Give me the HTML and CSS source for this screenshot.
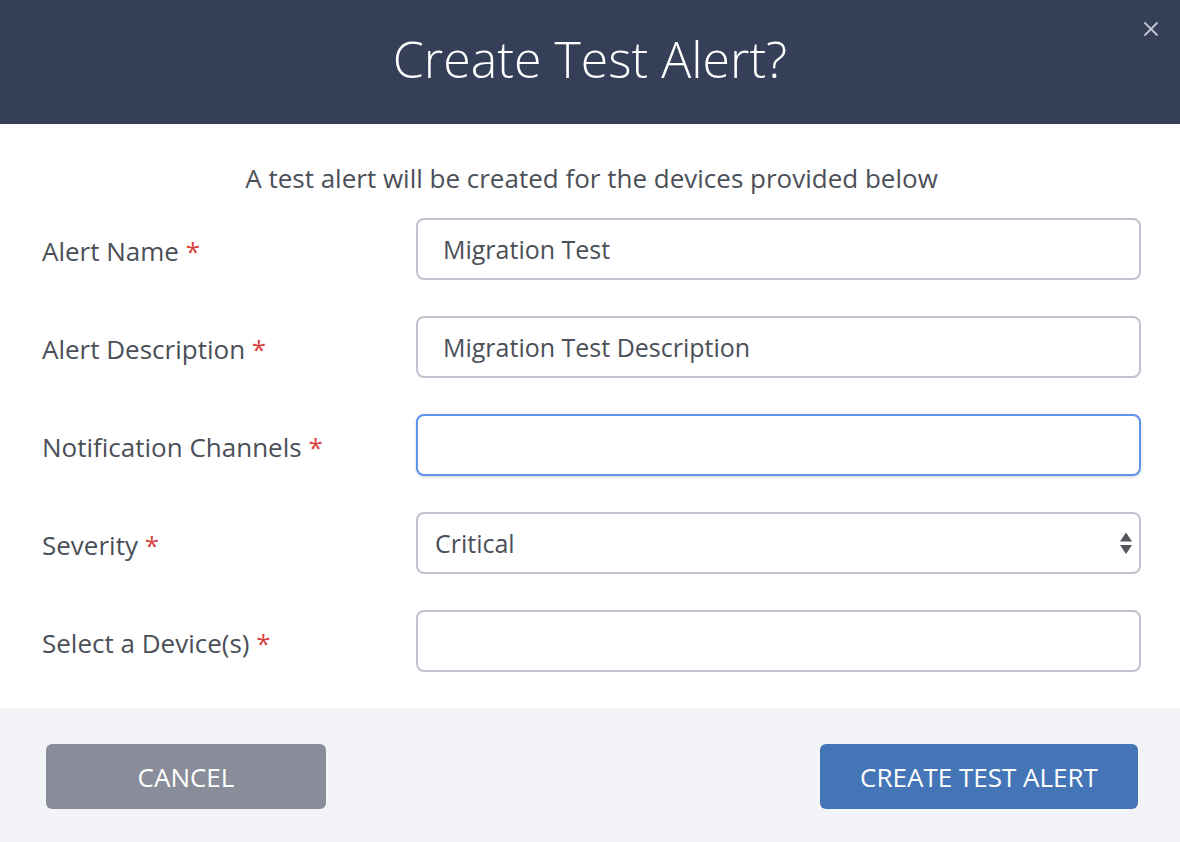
FILE: index.html
```html
<!DOCTYPE html>
<html lang="en">
<head>
<meta charset="utf-8">
<title>Create Test Alert?</title>
<link rel="stylesheet" href="styles.css">
</head>
<body>
<div class="modal">
  <header class="modal-header">
    <h1 class="modal-title">Create Test Alert?</h1>
    <button class="close" aria-label="Close">
      <svg width="14" height="14" viewBox="0 0 14 14"><path d="M1 1L13 13M13 1L1 13" stroke="currentColor" stroke-width="1.8" stroke-linecap="round"/></svg>
    </button>
  </header>
  <main class="modal-body">
    <p class="intro">A test alert will be created for the devices provided below</p>
    <form class="form">
      <label class="label">Alert Name <span class="req">*</span></label>
      <div class="field"><input class="input" type="text" value="Migration Test"></div>

      <label class="label">Alert Description <span class="req">*</span></label>
      <div class="field"><input class="input" type="text" value="Migration Test Description"></div>

      <label class="label">Notification Channels <span class="req">*</span></label>
      <div class="field"><div class="input focused"></div></div>

      <label class="label">Severity <span class="req">*</span></label>
      <div class="field">
        <div class="input select">
          <span>Critical</span>
          <svg class="arrows" width="12" height="24" viewBox="0 0 12 24"><path d="M6 1.5L12 10.5H0Z" fill="#53565f"/><path d="M6 23L12 14H0Z" fill="#53565f"/></svg>
        </div>
      </div>

      <label class="label">Select a Device(s) <span class="req">*</span></label>
      <div class="field"><div class="input"></div></div>
    </form>
  </main>
  <footer class="modal-footer">
    <button class="btn btn-cancel">CANCEL</button>
    <button class="btn btn-primary">CREATE TEST ALERT</button>
  </footer>
</div>
</body>
</html>
```

FILE: styles.css
```css
* { box-sizing: border-box; }
html, body {
  margin: 0;
  padding: 0;
  width: 1180px;
  height: 842px;
  overflow: hidden;
  background: #ffffff;
  font-family: "Open Sans", "Noto Sans", sans-serif;
}
.modal {
  display: flex;
  flex-direction: column;
  height: 842px;
}
.modal-header {
  position: relative;
  flex-shrink: 0;
  height: 124px;
  background: #353f57;
  display: flex;
  align-items: center;
  justify-content: center;
}
.modal-title {
  margin: 0;
  color: #ffffff;
  font-weight: 300;
  font-size: 50px;
  line-height: 1;
  padding-bottom: 6px;
}
.close {
  position: absolute;
  top: 22px;
  right: 22px;
  width: 14px;
  height: 14px;
  padding: 0;
  border: 0;
  background: none;
  color: #c3c7d2;
  display: flex;
}
.modal-body {
  flex-shrink: 0;
  padding: 0 39px 36px 42px;
}
.intro {
  margin: 0 0 22px;
  padding-top: 36px;
  text-align: center;
  font-size: 26px;
  line-height: 36px;
  color: #4b4f58;
}
.form {
  display: grid;
  grid-template-columns: 374px 1fr;
  row-gap: 36px;
  align-items: center;
}
.label {
  font-size: 26px;
  color: #4b4f58;
  padding-top: 4px;
}
.req { color: #d9433f; }
.input {
  display: flex;
  align-items: center;
  width: 100%;
  height: 62px;
  border: 2px solid #c0c3cd;
  border-radius: 8px;
  padding: 0 25px;
  font-family: inherit;
  font-size: 25px;
  color: #4b4f58;
  background: #fff;
  outline: none;
}
.input.focused {
  border-color: #5f93ec;
  box-shadow: 0 1px 3px rgba(60, 80, 120, 0.25);
}
.select {
  justify-content: space-between;
  padding: 0 7px 0 17px;
}
.arrows { display: block; }
.modal-footer {
  flex: 1;
  background: #f3f4f8;
  display: flex;
  justify-content: space-between;
  align-items: flex-start;
  padding: 36px 42px 0 46px;
}
.btn {
  height: 65px;
  border: 0;
  border-radius: 6px;
  color: #ffffff;
  font-family: inherit;
  font-size: 26px;
  font-weight: 500;
  padding: 0;
}
.btn-cancel { width: 280px; background: #898c99; }
.btn-primary { width: 318px; background: #4475b7; }
```
